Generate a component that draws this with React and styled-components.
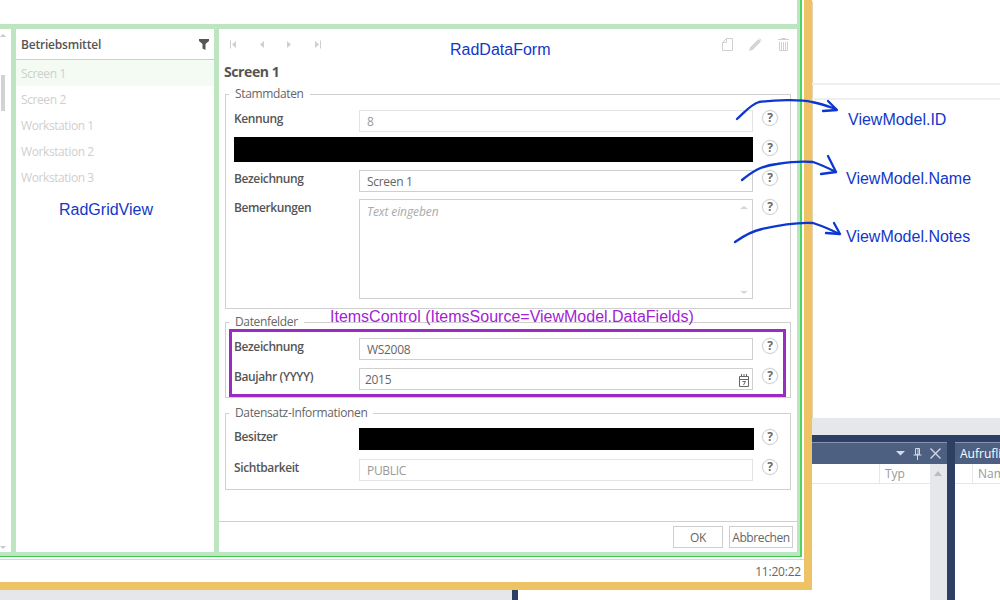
import React from "react";
import styled, { createGlobalStyle } from "styled-components";

const GlobalStyle = createGlobalStyle`
  html, body { margin: 0; padding: 0; background: #fff; }
  body { font-family: "Open Sans", "Noto Sans", sans-serif; font-size: 12px; overflow: hidden; }
  * { box-sizing: border-box; }
`;

const Page = styled.div`
  position: relative;
  width: 1000px;
  height: 600px;
  display: flex;
  overflow: hidden;
`;

const LeftColumn = styled.div`
  width: 812px;
  flex: none;
  display: flex;
  flex-direction: column;
`;

const Window = styled.div`
  height: 590px;
  display: flex;
  flex-direction: column;
  background: #fff;
  border-right: 8px solid #eec366;
  border-bottom: 8px solid #eec366;
  box-shadow: 1px 1px 0 -0.5px #c9a860;
`;

const Frame = styled.div`
  height: 557px;
  margin-right: 2px;
  display: flex;
  flex-direction: column;
  background: #bde6c0;
  border-right: 2px solid #4cd660;
  border-bottom: 1px solid #3fc955;
  padding-right: 3px;
  padding-bottom: 4px;
`;

const TopSpace = styled.div`
  height: 24px;
  background: #fff;
  flex: none;
`;

const Panes = styled.div`
  flex: 1;
  min-height: 0;
  padding-top: 5px;
  display: grid;
  grid-template-columns: 11px 198px 1fr;
  column-gap: 5px;
`;

const Sliver = styled.div`
  background: #fff;
  display: flex;
  flex-direction: column;
  align-items: flex-start;
  padding: 5px 0 3px 0;
`;

const SliverThumb = styled.div`
  width: 4px;
  height: 36px;
  margin: 38px 0 0 1px;
  background: #d2d2d2;
`;

const SliverArrow = styled.div`
  width: 0;
  height: 0;
  margin-top: ${(p) => (p.$down ? "auto" : "0")};
  border-left: 3px solid transparent;
  border-right: 3px solid transparent;
  ${(p) => (p.$down ? "border-top: 3px solid #c8c8c8;" : "border-bottom: 3px solid #c8c8c8;")}
`;

const GridPane = styled.div`
  background: #fff;
  display: flex;
  flex-direction: column;
`;

const GridHeader = styled.div`
  height: 31px;
  padding: 0 5px 0 5px;
  display: flex;
  align-items: center;
  justify-content: space-between;
  border-bottom: 1px solid #cfcfcf;
  font-weight: 600;
  color: #555;
  letter-spacing: -0.2px;
`;

const GridRow = styled.div`
  height: 26px;
  padding-left: 5px;
  display: flex;
  align-items: center;
  color: #cfcfcf;
  letter-spacing: -0.4px;
  background: ${(p) => (p.$selected ? "#f3fbf3" : "#fff")};
`;

const FormPane = styled.div`
  background: #fff;
  display: flex;
  flex-direction: column;
`;

const Toolbar = styled.div`
  height: 31px;
  flex: none;
  padding: 0 8px 0 10px;
  display: flex;
  align-items: center;
  justify-content: space-between;
`;

const ButtonGroup = styled.div`
  display: flex;
  align-items: center;
  gap: ${(p) => p.$gap}px;
`;

const Title = styled.div`
  height: 26px;
  flex: none;
  padding-left: 5px;
  font-size: 14px;
  line-height: 24px;
  font-weight: 700;
  color: #555;
  letter-spacing: -0.4px;
`;

const Group = styled.fieldset`
  margin: ${(p) => p.$top || 0}px 6px 0 6px;
  padding: ${(p) => p.$padTop}px 0 ${(p) => p.$padBottom}px 8px;
  border: 1px solid #d0d0d0;
  flex: none;
`;

const Legend = styled.legend`
  margin-left: -5px;
  padding: 0 6px;
  height: 16px;
  line-height: 16px;
  color: #666;
  letter-spacing: -0.35px;
`;

const Row = styled.div`
  display: grid;
  grid-template-columns: 125px 394px 1fr;
  height: ${(p) => p.$height || 22}px;
  margin-top: ${(p) => p.$gap || 0}px;
`;

const Label = styled.div`
  font-weight: 600;
  color: #555;
  line-height: 17px;
  letter-spacing: -0.4px;
`;

const Field = styled.div`
  position: relative;
  padding-left: ${(p) => p.$pad || 7}px;
  display: flex;
  align-items: center;
  background: #fff;
  color: ${(p) => (p.$muted ? "#999" : "#666")};
  border: 1px solid ${(p) => (p.$muted ? "#e4e4e4" : "#cfcfcf")};
  letter-spacing: -0.3px;
`;

const NotesField = styled.div`
  display: flex;
  justify-content: space-between;
  padding: 3px 3px 3px 7px;
  border: 1px solid #cfcfcf;
  color: #aaa;
  font-style: italic;
  letter-spacing: -0.1px;
`;

const NotesScroll = styled.div`
  display: flex;
  flex-direction: column;
  justify-content: space-between;
  padding: 3px 1px 1px 0;
`;

const ScrollArrow = styled.div`
  width: 0;
  height: 0;
  border-left: 4px solid transparent;
  border-right: 4px solid transparent;
  ${(p) => (p.$down ? "border-top: 3px solid #d6d6d6;" : "border-bottom: 3px solid #d6d6d6;")}
`;

const Redacted = styled.div`
  background: #000;
  grid-column: ${(p) => p.$span};
  width: ${(p) => p.$width}px;
`;

const Help = styled.div`
  width: 16px;
  height: 16px;
  margin: ${(p) => p.$drop || 0}px 0 0 9px;
  border-radius: 50%;
  border: 1px solid #cfcfcf;
  box-shadow: 0 0 0 0.5px #eee;
  display: flex;
  align-items: center;
  justify-content: center;
  font-size: 12px;
  line-height: 14px;
  font-weight: 700;
  color: #6a6a6a;
`;

const DateIcon = styled.svg`
  position: absolute;
  right: 2px;
  top: 4px;
`;

const Footer = styled.div`
  margin-top: auto;
  height: 31px;
  flex: none;
  border-top: 1px solid #cfcfcf;
  padding: 4px 4px 0 0;
  display: flex;
  justify-content: flex-end;
  gap: 6px;
`;

const DialogButton = styled.div`
  width: ${(p) => p.$width}px;
  height: 22px;
  border: 1px solid #cfcfcf;
  display: flex;
  align-items: center;
  justify-content: center;
  color: #666;
  letter-spacing: -0.4px;
`;

const StatusBar = styled.div`
  flex: 1;
  margin-top: 2px;
  padding: 1px 3px 0 0;
  border-top: 1px solid #d6d6d6;
  display: flex;
  align-items: center;
  justify-content: flex-end;
  color: #666;
  letter-spacing: -0.2px;
`;

const BottomStrip = styled.div`
  height: 10px;
  display: flex;
  background: #fff;
`;

const StripGray = styled.div`
  width: 512px;
  background: #e6e7eb;
`;

const StripNavy = styled.div`
  width: 6px;
  background: #2d3f63;
`;

const RightColumn = styled.div`
  flex: 1;
  min-width: 0;
  display: flex;
  flex-direction: column;
`;

const Blank = styled.div`
  height: 418px;
  padding-top: 83px;
  flex: none;
`;

const Rule = styled.div`
  height: 2px;
  margin-bottom: 13px;
  background: #efefef;
`;

const GrayBand = styled.div`
  height: 17px;
  flex: none;
  background: #e6e7eb;
`;

const Dock = styled.div`
  flex: 1;
  display: flex;
  gap: 8px;
  padding-top: 7px;
  background: #2d3f63;
`;

const DockPanel = styled.div`
  width: ${(p) => p.$width || 0}px;
  flex: ${(p) => (p.$width ? "none" : "1")};
  min-width: 0;
  display: flex;
  flex-direction: column;
  background: #fff;
`;

const DockTitle = styled.div`
  height: 22px;
  flex: none;
  padding: 0 6px 0 5px;
  display: flex;
  align-items: center;
  justify-content: ${(p) => (p.$start ? "flex-start" : "flex-end")};
  gap: 8px;
  background: #4d6082;
  border-top: 1px solid #8495b3;
  color: #fff;
  white-space: nowrap;
  overflow: hidden;
`;

const DockBody = styled.div`
  flex: 1;
  display: flex;
`;

const DockColumns = styled.div`
  flex: 1;
  height: 20px;
  display: flex;
  justify-content: ${(p) => (p.$start ? "flex-start" : "flex-end")};
  border-bottom: 1px solid #e6e7eb;
  color: #999;
  overflow: hidden;
`;

const DockColumn = styled.div`
  width: ${(p) => p.$width}px;
  flex: none;
  margin-left: ${(p) => p.$offset || 0}px;
  padding-left: 5px;
  border-left: 1px solid #e6e7eb;
  line-height: 19px;
`;

const DockScroll = styled.div`
  width: 17px;
  flex: none;
  padding: 7px 0 0 4px;
  background: #e6e7eb;
`;

const DockArrow = styled.div`
  width: 0;
  height: 0;
  border-left: 4.5px solid transparent;
  border-right: 4.5px solid transparent;
  border-bottom: 5px solid #b9bcc4;
`;

const Note = styled.div`
  position: absolute;
  left: ${(p) => p.$x}px;
  top: ${(p) => p.$y}px;
  font-family: "Liberation Sans", Arial, sans-serif;
  font-size: 16px;
  line-height: 20px;
  white-space: nowrap;
  color: ${(p) => p.$color || "#1238c8"};
`;

const SelectionBox = styled.div`
  position: absolute;
  left: 229px;
  top: 329px;
  width: 557px;
  height: 68px;
  border: 3px solid #9a2cc4;
`;

const ArrowLayer = styled.svg`
  position: absolute;
  left: 0;
  top: 0;
  pointer-events: none;
`;

function NavIcon({ dir, bar }) {
  const flip = dir === "right" ? "translate(9 0) scale(-1 1)" : undefined;
  return (
    <svg width="9" height="9" viewBox="0 0 9 9">
      <g transform={flip} fill="#cfcfcf">
        <path d="M3 4.5 7 1v7z" />
        {bar && <rect x="1" y="0.5" width="1" height="8" />}
      </g>
    </svg>
  );
}

function NewIcon() {
  return (
    <svg width="11" height="13" viewBox="0 0 11 13" fill="none" stroke="#d0d0d0">
      <path d="M.5 4.5 4.500.5h6v12H.5z" />
      <path d="M4.500.5v4h-4" />
    </svg>
  );
}

function PencilIcon() {
  return (
    <svg width="13" height="13" viewBox="0 0 13 13" fill="#d4d4d4">
      <path d="M0 13l1-3.600L9.400 1 12 3.600 3.600 12zM10 .4l.5-.4L13 2.500l-.4.500z" />
    </svg>
  );
}

function TrashIcon() {
  return (
    <svg width="11" height="13" viewBox="0 0 11 13" fill="none" stroke="#d0d0d0">
      <path d="M0 1.500h11M3.500 1.500V.5h4v1M1.500 3.500v9h8v-9M3.500 4v8M5.500 4v8M7.500 4v8" />
    </svg>
  );
}

function FilterIcon() {
  return (
    <svg width="10" height="11" viewBox="0 0 10 11" fill="#555">
      <path d="M0 0h10v2L6.500 5v6l-3-1.500V5L0 2z" />
    </svg>
  );
}

function CalendarIcon() {
  return (
    <DateIcon width="12" height="15" viewBox="0 0 12 15" fill="none" stroke="#666">
      <path d="M1.500 3.500h9v10h-9zM1.500 6.500h9M3.500 1v3M6 1v3M8.500 1v3" />
      <path d="M4.500 8.500h3L5.500 12" />
    </DateIcon>
  );
}

const items = ["Screen 1", "Screen 2", "Workstation 1", "Workstation 2", "Workstation 3"];

export default function App() {
  return (
    <Page>
      <GlobalStyle />
      <LeftColumn>
        <Window>
          <Frame>
            <TopSpace />
            <Panes>
              <Sliver>
                <SliverArrow />
                <SliverThumb />
                <SliverArrow $down />
              </Sliver>
              <GridPane>
                <GridHeader>
                  Betriebsmittel
                  <FilterIcon />
                </GridHeader>
                {items.map((item, i) => (
                  <GridRow key={item} $selected={i === 0}>
                    {item}
                  </GridRow>
                ))}
              </GridPane>
              <FormPane>
                <Toolbar>
                  <ButtonGroup $gap={19}>
                    <NavIcon dir="left" bar />
                    <NavIcon dir="left" />
                    <NavIcon dir="right" />
                    <NavIcon dir="right" bar />
                  </ButtonGroup>
                  <ButtonGroup $gap={16}>
                    <NewIcon />
                    <PencilIcon />
                    <TrashIcon />
                  </ButtonGroup>
                </Toolbar>
                <Title>Screen 1</Title>
                <Group $padTop={8} $padBottom={9}>
                  <Legend>Stammdaten</Legend>
                  <Row>
                    <Label>Kennung</Label>
                    <Field $muted>8</Field>
                    <Help>?</Help>
                  </Row>
                  <Row $height={25} $gap={5}>
                    <Redacted $span="1 / 3" $width={519} />
                    <Help $drop={3}>?</Help>
                  </Row>
                  <Row $gap={8}>
                    <Label>Bezeichnung</Label>
                    <Field>Screen 1</Field>
                    <Help>?</Help>
                  </Row>
                  <Row $height={100} $gap={7}>
                    <Label>Bemerkungen</Label>
                    <NotesField>
                      Text eingeben
                      <NotesScroll>
                        <ScrollArrow />
                        <ScrollArrow $down />
                      </NotesScroll>
                    </NotesField>
                    <Help>?</Help>
                  </Row>
                </Group>
                <Group $top={5} $padTop={8} $padBottom={7}>
                  <Legend>Datenfelder</Legend>
                  <Row>
                    <Label>Bezeichnung</Label>
                    <Field>WS2008</Field>
                    <Help>?</Help>
                  </Row>
                  <Row $gap={8}>
                    <Label>Baujahr (YYYY)</Label>
                    <Field $pad={5}>
                      2015
                      <CalendarIcon />
                    </Field>
                    <Help>?</Help>
                  </Row>
                </Group>
                <Group $top={7} $padTop={7} $padBottom={8}>
                  <Legend>Datensatz-Informationen</Legend>
                  <Row>
                    <Label>Besitzer</Label>
                    <Redacted $span="2" $width={395} />
                    <Help $drop={1}>?</Help>
                  </Row>
                  <Row $gap={9}>
                    <Label>Sichtbarkeit</Label>
                    <Field $muted>PUBLIC</Field>
                    <Help>?</Help>
                  </Row>
                </Group>
                <Footer>
                  <DialogButton $width={50}>OK</DialogButton>
                  <DialogButton $width={64}>Abbrechen</DialogButton>
                </Footer>
              </FormPane>
            </Panes>
          </Frame>
          <StatusBar>11:20:22</StatusBar>
        </Window>
        <BottomStrip>
          <StripGray />
          <StripNavy />
        </BottomStrip>
      </LeftColumn>
      <RightColumn>
        <Blank>
          <Rule />
          <Rule />
        </Blank>
        <GrayBand />
        <Dock>
          <DockPanel $width={135}>
            <DockTitle>
              <svg width="9" height="5" viewBox="0 0 9 5" fill="#d5dbe6">
                <path d="M0 0h9L4.500 4.500z" />
              </svg>
              <svg width="9" height="12" viewBox="0 0 9 12" fill="none" stroke="#d5dbe6">
                <path d="M2.500.5h4v6h-4zM.5 7h8M4.500 7v5M5 1v5" />
              </svg>
              <svg width="11" height="11" viewBox="0 0 11 11" fill="none" stroke="#d5dbe6" strokeWidth="1.300">
                <path d="M.5.5l10 10M10.500.5l-10 10" />
              </svg>
            </DockTitle>
            <DockBody>
              <DockColumns>
                <DockColumn $width={51}>Typ</DockColumn>
              </DockColumns>
              <DockScroll>
                <DockArrow />
              </DockScroll>
            </DockBody>
          </DockPanel>
          <DockPanel>
            <DockTitle $start>Aufrufli</DockTitle>
            <DockBody>
              <DockColumns $start>
                <DockColumn $width={28} $offset={17}>Nam</DockColumn>
              </DockColumns>
            </DockBody>
          </DockPanel>
        </Dock>
      </RightColumn>

      <SelectionBox />
      <Note $x={59} $y={200}>RadGridView</Note>
      <Note $x={450} $y={40}>RadDataForm</Note>
      <Note $x={848} $y={110}>ViewModel.ID</Note>
      <Note $x={846} $y={169}>ViewModel.Name</Note>
      <Note $x={846} $y={227}>ViewModel.Notes</Note>
      <Note $x={330} $y={307} $color="#a322d6">ItemsControl (ItemsSource=ViewModel.DataFields)</Note>
      <ArrowLayer width="1000" height="600" fill="none" stroke="#0c36d0" strokeWidth="2.300" strokeLinecap="round" strokeLinejoin="round">
        <path d="M737 119C745 112 750 105 759 102C775 100 800 99 812 102C822 104 830 107 836 109" />
        <path d="M828 101L837 110L823 111" />
        <path d="M742 180C752 172 760 166 777 164C790 162 803 161 813 162C822 165 830 169 836 172" />
        <path d="M828 156L836 172L821 174" />
        <path d="M735 242C745 235 752 231 762 229C775 226 795 222 813 223C822 226 832 230 839 234" />
        <path d="M834 223L840 234L826 233" />
      </ArrowLayer>
    </Page>
  );
}
